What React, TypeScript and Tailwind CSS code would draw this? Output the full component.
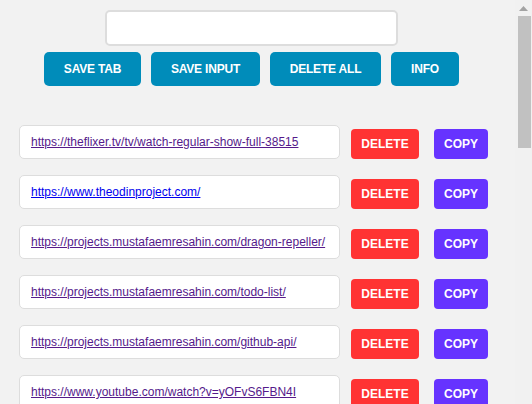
import React from "react";

const links: { url: string; visited: boolean }[] = [
    { url: "https://theflixer.tv/tv/watch-regular-show-full-38515", visited: true },
    { url: "https://www.theodinproject.com/", visited: false },
    { url: "https://projects.mustafaemresahin.com/dragon-repeller/", visited: true },
    { url: "https://projects.mustafaemresahin.com/todo-list/", visited: true },
    { url: "https://projects.mustafaemresahin.com/github-api/", visited: true },
    { url: "https://www.youtube.com/watch?v=yOFvS6FBN4I", visited: true },
];

const topButtons = [
    { label: "SAVE TAB", w: "w-[97px]" },
    { label: "SAVE INPUT", w: "w-[109px]" },
    { label: "DELETE ALL", w: "w-[111px]" },
    { label: "INFO", w: "w-[68px]" },
];

export default function App() {
    return (
        <div className="h-[404px] overflow-hidden flex bg-[#f2f2f2]" style={{ fontFamily: "'Liberation Sans', Arial, sans-serif" }}>
            {/* Page */}
            <div className="flex-1 pt-[10px] overflow-hidden">
                <div className="ml-[19px] w-[465px] flex flex-col items-center">
                    <input className="w-[293px] h-[36px] bg-white border-2 border-[#dddddd] rounded-[5px] outline-none px-2 text-[13px]" />
                    <div className="flex gap-[10px] mt-[6px]">
                        {topButtons.map(b => (
                            <button key={b.label} className={`${b.w} h-[34px] rounded-[5px] bg-[#008cba] text-white font-bold text-[12px] tracking-[-0.2px]`}>
                                {b.label}
                            </button>
                        ))}
                    </div>
                </div>

                <ul className="ml-[19px] mt-[39px] flex flex-col gap-[16px]">
                    {links.map(l => (
                        <li key={l.url} className="flex items-center">
                            <div className="w-[321px] h-[34px] bg-white border border-[#dddddd] rounded-[5px] flex items-center pl-[11px] overflow-hidden whitespace-nowrap">
                                <a href="#" className={`text-[12px] underline ${l.visited ? "text-[#551a8b]" : "text-[#0000ee]"}`}>{l.url}</a>
                            </div>
                            <button className="ml-[11px] mt-[3px] w-[68px] h-[30px] rounded-[4px] bg-[#ff3333] text-white font-bold text-[12px]">DELETE</button>
                            <button className="ml-[15px] mt-[3px] w-[54px] h-[30px] rounded-[4px] bg-[#6633ff] text-white font-bold text-[12px]">COPY</button>
                        </li>
                    ))}
                </ul>
            </div>

            {/* Scrollbar */}
            <div className="w-[17px] shrink-0 bg-[#f1f1f1] flex flex-col items-center">
                <div className="h-[16px] w-full flex items-center justify-center">
                    <svg width="9" height="5" viewBox="0 0 9 5"><path d="M4.5 0 L9 5 L0 5 Z" fill="#a3a3a3" /></svg>
                </div>
                <div className="w-[13px] ml-[1px] h-[132px] bg-[#c1c1c1]" />
            </div>
        </div>
    );
}
